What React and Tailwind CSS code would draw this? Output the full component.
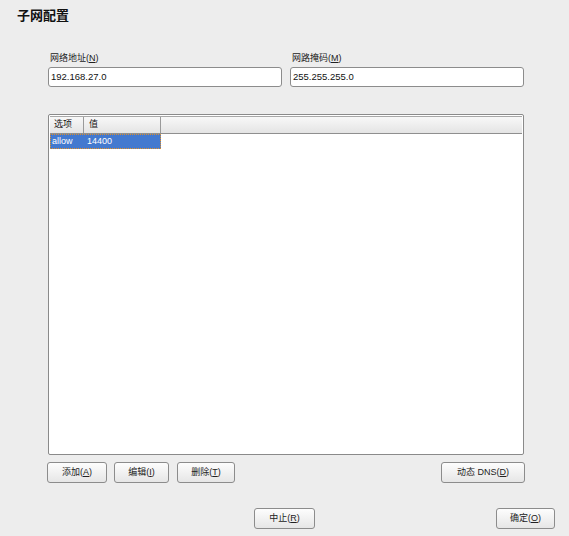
const font = { fontFamily: '"Liberation Sans", "Noto Sans CJK SC", sans-serif' };

const Btn = ({ label, hot, rest = ')', w }) => (
  <button
    className={`h-[21px] ${w} rounded-[3px] border border-[#8c8c8c] bg-gradient-to-b from-[#fdfdfd] to-[#e6e6e6] text-[9px] leading-none text-[#222] flex items-center justify-center`}
  >
    <span>
      {label}(<span className="underline">{hot}</span>{rest}
    </span>
  </button>
);

const Field = ({ label, hot, value }) => (
  <div className="flex flex-col w-[234px]">
    <div className="h-[17px] pl-[2px] pt-[3px] text-[9px] leading-[10px] text-[#222]">
      {label}(<span className="underline">{hot}</span>)
    </div>
    <div className="h-[20px] rounded-[3px] border border-[#8c8c8c] bg-white flex items-center pl-[2px] text-[9.5px] text-[#111]">
      {value}
    </div>
  </div>
);

export default function App() {
  return (
    <div className="w-[569px] h-[536px] bg-[#ededed] flex flex-col" style={font}>
      <div className="h-[50px] pl-[17px] pt-[7px] text-[13px] leading-[18px] font-bold text-[#111]">
        子网配置
      </div>

      <div className="pl-[48px] pr-[45px] flex flex-col">
        <div className="flex justify-between">
          <Field label="网络地址" hot="N" value="192.168.27.0" />
          <Field label="网路掩码" hot="M" value="255.255.255.0" />
        </div>

        <div className="mt-[27px] h-[341px] w-[476px] rounded-[2px] border border-[#8a8a8a] bg-white p-[1px] flex flex-col">
          <div className="h-[18px] flex border-t border-[#a8a8a8] border-b border-b-[#8f8f8f] bg-gradient-to-b from-[#f8f8f8] to-[#e4e4e4] text-[9px] text-[#111]">
            <div className="w-[34px] border-r border-[#9a9a9a] flex items-center pl-[4px]">选项</div>
            <div className="w-[77px] border-r border-[#9a9a9a] flex items-center pl-[5px]">值</div>
            <div className="flex-1" />
          </div>
          <div className="h-[15px] w-[111px] bg-[#4379cf] border border-dotted border-[#e0902a] flex items-center text-[9px] text-white">
            <div className="w-[34px] pl-[1px]">allow</div>
            <div className="pl-[2px]">14400</div>
          </div>
        </div>

        <div className="mt-[7px] -ml-[1px] -mr-[1px] flex items-center">
          <Btn label="添加" hot="A" w="w-[60px]" />
          <div className="w-[7px]" />
          <Btn label="编辑" hot="I" w="w-[55px]" />
          <div className="w-[8px]" />
          <Btn label="删除" hot="T" w="w-[58px]" />
          <div className="flex-1" />
          <Btn label="动态 DNS" hot="D" w="w-[84px]" />
        </div>
      </div>

      <div className="mt-[25px] grid grid-cols-3 items-center">
        <div />
        <div className="flex justify-center">
          <Btn label="中止" hot="R" w="w-[61px]" />
        </div>
        <div className="flex justify-end pr-[14px]">
          <Btn label="确定" hot="O" w="w-[59px]" />
        </div>
      </div>
    </div>
  );
}
